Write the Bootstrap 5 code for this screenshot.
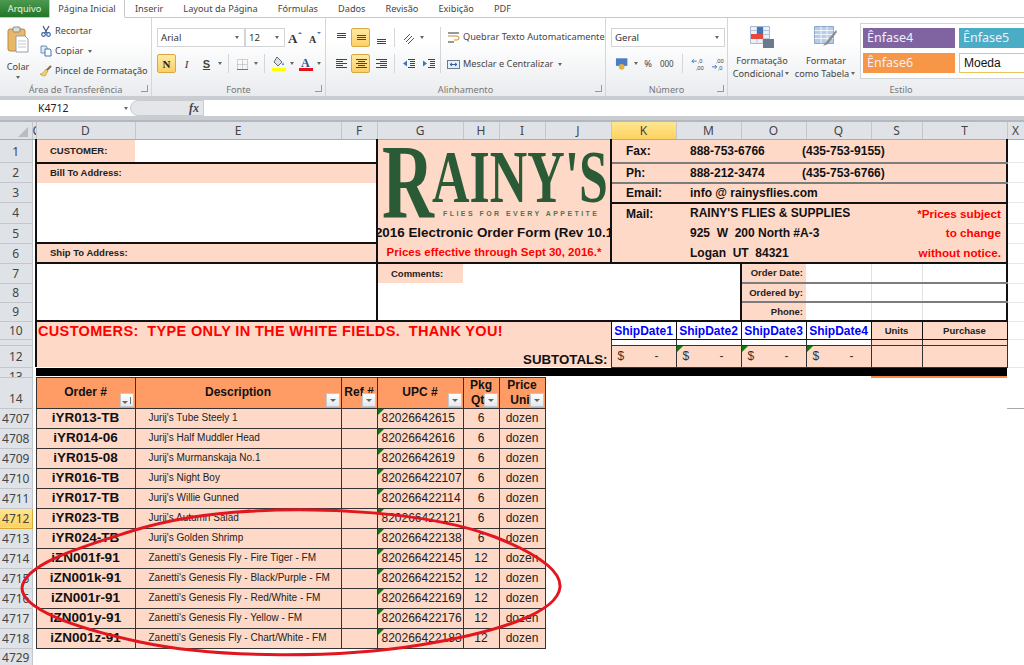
<!DOCTYPE html>
<html lang="pt-BR">
<head>
<meta charset="UTF-8">
<meta name="viewport" content="width=device-width, initial-scale=1.0">
<title>Rainy's Order Form</title>
<link href="https://cdn.jsdelivr.net/npm/bootstrap@5.3.0/dist/css/bootstrap.min.css" rel="stylesheet">
<style>
html, body { height: 665px; overflow: hidden; }
body { position: relative; background: #fff; font-family: "Noto Sans", sans-serif; font-size: 9.2px; color: #444; line-height: 1; }

/* tabs */
.xl-tabs { height: 18px; border-bottom: 1px solid #c6c9cd; }
.xl-file { width: 49px; background: linear-gradient(#4d9a4f, #22752a); color: #e8f3e8; }
.xl-tab { padding: 0 10px; white-space: nowrap; }
.xl-tab-on { width: 76px; margin-bottom: -1px; background: #fff; border: 1px solid #c6c9cd; border-top: 0; border-bottom-color: #fff; padding: 0; justify-content: center; }

/* ribbon */
.xl-ribbon { height: 78px; background: linear-gradient(#fff 30%, #e9ebee); overflow: hidden; }
.xl-grp { flex: none; border-right: 1px solid #d4d6d9; position: relative; }
.xl-grp-body { height: 65px; }
.xl-grp-name { height: 13px; color: #777; justify-content: center; position: relative; }
.xl-launch { position: absolute; right: 3px; top: 2px; width: 7px; height: 7px; border: 1px solid #999; border-width: 0 1px 1px 0; }
.xl-clip { width: 152px; }
.xl-font { width: 174px; }
.xl-align { width: 280px; }
.xl-num { width: 122px; }
.xl-style { width: 346px; border-right: 0; }
.xl-colar { width: 28px; padding-top: 8px; }
.xl-small { gap: 8px; padding-top: 7px; }
.xl-small > div { height: 12px; gap: 3px; white-space: nowrap; }
.xl-small svg { width: 12px; height: 12px; }
.xl-caret { display: inline-block; width: 0; height: 0; border: 2.5px solid transparent; border-top: 3px solid #666; border-bottom: 0; margin: 0 2px; flex: none; }
.xl-rows { padding: 10px 0 0 5px; gap: 7px; }
.xl-r { height: 19px; }
.xl-combo { height: 19px; flex: none; background: #fff; border: 1px solid #d2d5d8; padding: 0 3px; justify-content: space-between; color: #333; font-size: 9.6px; }
.xl-combo-font { width: 88px; }
.xl-combo-size { width: 40px; }
.xl-combo-num { width: 114px; }
.xl-ib { width: 19px; height: 19px; flex: none; justify-content: center; }
.xl-ib svg { display: block; }
.xl-ib + .xl-ib { margin-left: 1px; }
.xl-hot { background: linear-gradient(#fee9a4, #fbcf68); border: 1px solid #d8a93f; border-radius: 2px; }
.xl-sep { width: 1px; height: 19px; background: #d4d6d9; margin: 0 4px; flex: none; }
.xl-sep-tall { height: 46px; margin: 9px 0 0 2px; }
.xl-bold { font: bold 11px "Liberation Serif", serif; color: #222; }
.xl-ital { font: italic 11px "Liberation Serif", serif; color: #333; }
.xl-ul { font: bold 11px "Liberation Sans", sans-serif; text-decoration: underline; color: #444; }
.xl-wide { gap: 11px; padding: 11px 0 0 6px; white-space: nowrap; }
.xl-wide > div { height: 16px; gap: 3px; }
.xl-thou { font-size: 8px; }
.xl-bigbtn { width: 64px; text-align: center; padding-top: 8px; line-height: 12.5px; flex: none; white-space: nowrap; }
.xl-bigbtn svg { display: block; margin: 0 auto 7px; }
.xl-bigbtn-first { margin-left: 2px; }
.xl-gallery { width: 200px; height: 56px; margin: 5px 0 0 2px; background: #fff; border: 1px solid #d2d5d8; padding: 4px 2px; gap: 4px; flex-wrap: wrap; flex: none; }
.xl-st { height: 20px; width: 92px; color: #f3eef8; font-size: 12.5px; padding-left: 4px; white-space: nowrap; }
.xl-st-4 { background: #8064a2; }
.xl-st-5 { background: #4bacc6; }
.xl-st-6 { background: #f79646; }
.xl-st-m { background: #fff; border: 1px solid #eac45c; color: #111; font: 12px "Liberation Sans", sans-serif; }

/* formula bar */
.xl-band { height: 4px; background: #c9ccd0; }
.xl-fbar { height: 17px; border-bottom: 1px solid #c9ccd0; }
.xl-name { width: 130px; padding-left: 38px; justify-content: space-between; color: #222; font-size: 10.5px; }
.xl-fx { width: 74px; background: #e4e6e9; border: 1px solid #c9ccd0; border-radius: 8px 0 0 8px; justify-content: flex-end; padding-right: 4px; font: italic bold 12px "Liberation Serif", serif; color: #444; }
.xl-gap { height: 3px; background: #c9ccd0; }

/* sheet */
.xl-sheet { width: 1024px; table-layout: fixed; border-collapse: collapse; font-family: "Liberation Sans", sans-serif; color: #111; }
.xl-sheet td, .xl-sheet th { padding: 0; overflow: hidden; white-space: nowrap; }
.xl-h0 { height: 17px; } .xl-h1 { height: 23px; } .xl-h20 { height: 20px; } .xl-h19 { height: 19px; } .xl-h10 { height: 18px; }
.xl-h11 { height: 5px; } .xl-h12 { height: 21px; } .xl-h13 { height: 10px; } .xl-h14 { height: 30px; } .xl-h-last { height: 18px; }
.xl-ch { background: #dfe3e8; border: 1px solid #c3c7cc; border-top: 2px solid #b4b8bd; border-bottom: 1px solid #a8acb1; text-align: center; color: #444; font: 12px "Noto Sans", sans-serif !important; }
.xl-ch-on { background: linear-gradient(#ffe68f, #fcd25f); border-bottom-color: #d6a93a; }
.xl-ch-sliver { text-align: left; }
.xl-rh { background: #dfe3e8; border: 1px solid #c3c7cc; border-left: 0; text-align: center; color: #444; font: 12px "Noto Sans", sans-serif; }
.xl-rh-bot { vertical-align: bottom; padding-bottom: 1px !important; }
.xl-rh-on { background: linear-gradient(#ffe68f, #fcd25f); border-color: #d6a93a; }
.xl-rh-clip { height: 9px; overflow: hidden; }
.xl-corner { background: #dfe3e8; border-top: 2px solid #b4b8bd; border-bottom: 1px solid #a8acb1; border-right: 1px solid #c3c7cc; position: relative; }
.xl-corner::after { content: ""; position: absolute; right: 4px; bottom: 2px; border: 5px solid #b9bdc2; border-top-color: transparent; border-left-color: transparent; }
.xl-peach { background: #ffd9c7; }
.xl-white { background: #fff; }
.xl-bk-t { border-top: 2px solid #111; }
.xl-bk-b { border-bottom: 2px solid #111; }
.xl-bk-l { border-left: 2px solid #111; }
.xl-bk-r { border-right: 2px solid #111; }
.xl-gl { border-bottom: 2px solid #7c7c7c; }
.xl-thin-r { border-right: 1px solid #e2e2e2; }
.xl-faint { border-bottom: 1px solid #e8e8e8; }
.xl-tick { border-bottom: 1px solid #aaa; }
.xl-lbl { font-size: 9.5px; font-weight: bold; padding-left: 13px !important; color: #222; }
.xl-lbl-r { font-size: 9.5px; font-weight: bold; text-align: right; padding-right: 3px !important; color: #222; }
.xl-info { font-size: 12px; font-weight: bold; color: #111; }
.xl-info-k { padding-left: 14px !important; }
.xl-info-v { padding-left: 14px !important; }
.xl-phone { width: 112px; display: inline-block; }
.xl-note { color: #f00; text-align: right; padding-right: 5px !important; font-size: 11.7px; font-weight: bold; }
.xl-title { font-size: 13.4px; font-weight: bold; justify-content: center; }
.xl-prices { font-size: 11.5px; font-weight: bold; color: #f00; text-align: center; }
.xl-logo { display: block; }
.xl-warn { font: bold 14.5px "Liberation Sans", sans-serif; color: #f00; padding: 1px 0 0 1px; letter-spacing: .34px; height: 26px; }
.xl-sub { font: bold 13.3px "Liberation Sans", sans-serif; text-align: right; padding-right: 3px; color: #111; }
.xl-ship { color: #00f; font-size: 12px; font-weight: bold; text-align: center; border: 1px solid #111; border-top-width: 2px; }
.xl-unit { font-size: 9.5px; font-weight: bold; text-align: center; border: 1px solid #111; border-top-width: 2px; color: #222; }
.xl-box { border: 1px solid #333; }
.xl-dollar { font-size: 12px; color: #333; padding: 0 17px 0 6px !important; }
.xl-black { background: #000; }
.xl-hd { background: #ff9c66; border: 1px solid #333; font-weight: bold; font-size: 12px; text-align: center; position: relative; color: #111; line-height: 15px; white-space: normal !important; }
.xl-flt { position: absolute; right: 1px; bottom: 1px; width: 14px; height: 14px; background: linear-gradient(#fff, #e6e8eb); border: 1px solid #c3c7cc; }
.xl-flt::after { content: ""; position: absolute; left: 3px; top: 5px; border: 3px solid transparent; border-top: 3px solid #666; border-bottom: 0; }
.xl-flt-sort::before { content: ""; position: absolute; right: 2px; top: 3px; width: 1px; height: 7px; background: #777; }
.xl-flt-sort::after { left: 1px; top: 7px; }
.xl-o-t { border-top: 2px solid #f58a4b; }
.xl-d td { border: 1px solid #333; background: #ffd9c7; }
.xl-d .xl-rh { background: #dfe3e8; border: 1px solid #c3c7cc; border-left: 0; }
.xl-d .xl-rh-on { background: linear-gradient(#ffe68f, #fcd25f); border-color: #d6a93a; }
.xl-d .xl-free { background: #fff; border: 0; }
.xl-ord { font-size: 13.5px; font-weight: bold; text-align: center; }
.xl-desc { font-size: 10px; padding-left: 13px !important; color: #222; }
.xl-upc { font-size: 12px; padding-left: 4px !important; color: #222; }
.xl-flag { position: relative; }
.xl-flag::before { content: ""; position: absolute; left: 0; top: 0; border: 3px solid transparent; border-top-color: #0a7d0a; border-left-color: #0a7d0a; }
.xl-ctr { font-size: 12px; text-align: center; color: #222; }
.xl-circle { position: absolute; left: 0; top: 0; pointer-events: none; }
</style>
</head>
<body>

<svg width="0" height="0" class="position-absolute">
  <symbol id="ln-top" viewBox="0 0 14 14"><path d="M3 2.500h9M3 4.500h9M3 6.500h9" stroke="#444" fill="none"/></symbol>
  <symbol id="ln-mid" viewBox="0 0 14 14"><path d="M3 4.500h9M3 6.500h9M3 8.500h9" stroke="#444" fill="none"/></symbol>
  <symbol id="ln-bot" viewBox="0 0 14 14"><path d="M3 8.500h9M3 10.500h9M3 12.500h9" stroke="#444" fill="none"/></symbol>
  <symbol id="al-l" viewBox="0 0 14 14"><path d="M2 2.500h11M2 4.500h7M2 6.500h11M2 8.500h7M2 10.500h11" stroke="#444" fill="none"/></symbol>
  <symbol id="al-c" viewBox="0 0 14 14"><path d="M2 2.500h11M4 4.500h7M2 6.500h11M4 8.500h7M2 10.500h11" stroke="#444" fill="none"/></symbol>
  <symbol id="al-r" viewBox="0 0 14 14"><path d="M2 2.500h11M6 4.500h7M2 6.500h11M6 8.500h7M2 10.500h11" stroke="#444" fill="none"/></symbol>
  <symbol id="in-l" viewBox="0 0 14 14"><path d="M6 2.500h7M8 4.500h5M8 6.500h5M8 8.500h5M6 10.500h7" stroke="#444" fill="none"/><path d="M1 6.500l4-3v6z" fill="#3b78c4"/></symbol>
  <symbol id="in-r" viewBox="0 0 14 14"><path d="M6 2.500h7M8 4.500h5M8 6.500h5M8 8.500h5M6 10.500h7" stroke="#444" fill="none"/><path d="M5 6.500L1 3.500v6z" fill="#3b78c4"/></symbol>
</svg>

<div class="xl-tabs d-flex align-items-stretch">
  <div class="xl-file d-flex align-items-center justify-content-center">Arquivo</div>
  <div class="xl-tab xl-tab-on d-flex align-items-center">Página Inicial</div>
  <div class="xl-tab d-flex align-items-center">Inserir</div>
  <div class="xl-tab d-flex align-items-center">Layout da Página</div>
  <div class="xl-tab d-flex align-items-center">Fórmulas</div>
  <div class="xl-tab d-flex align-items-center">Dados</div>
  <div class="xl-tab d-flex align-items-center">Revisão</div>
  <div class="xl-tab d-flex align-items-center">Exibição</div>
  <div class="xl-tab d-flex align-items-center">PDF</div>
</div>

<div class="xl-ribbon d-flex">
  <!-- Area de Transferencia -->
  <div class="xl-grp xl-clip">
    <div class="xl-grp-body d-flex ps-1">
      <div class="xl-colar text-center">
        <svg width="22" height="28" viewBox="0 0 22 28" class="d-block mx-auto mb-2">
          <rect x="1" y="3" width="17" height="22" rx="2" fill="#e8b868" stroke="#b98a3e"/>
          <rect x="6" y="1" width="7" height="5" rx="1" fill="#ddd" stroke="#8a8a8a"/>
          <path d="M9 10h9l3 3v13H9z" fill="#fff" stroke="#9a9ea3"/>
          <path d="M11 15h8M11 18h8M11 21h8" stroke="#c3c6ca"/>
        </svg>
        <div>Colar</div>
        <span class="xl-caret mt-1"></span>
      </div>
      <div class="xl-small d-flex flex-column ms-2">
        <div class="d-flex align-items-center"><svg viewBox="0 0 12 12"><path d="M3 1l4 7M9 1L5 8" stroke="#4a5a78" stroke-width="1.3" fill="none"/><circle cx="3.500" cy="9.500" r="1.800" fill="none" stroke="#3860a8" stroke-width="1.200"/><circle cx="8.500" cy="9.500" r="1.800" fill="none" stroke="#3860a8" stroke-width="1.200"/></svg><span>Recortar</span></div>
        <div class="d-flex align-items-center"><svg viewBox="0 0 12 12"><path d="M1 1h5l1 1v6H1z" fill="#dfeaf7" stroke="#6f8fb8"/><path d="M5 4h5l1 1v6H5z" fill="#fff" stroke="#3f74b8"/></svg><span>Copiar</span><span class="xl-caret"></span></div>
        <div class="d-flex align-items-center"><svg viewBox="0 0 12 12"><path d="M11 1L6 6" stroke="#8a6a2a" stroke-width="2"/><path d="M6 4l2 2-3 5c-2 0-4-1-5-2 2 0 4-2 6-5z" fill="#f2cf6b" stroke="#a98a3a" stroke-width=".6"/></svg><span>Pincel de Formatação</span></div>
      </div>
    </div>
    <div class="xl-grp-name d-flex align-items-center">Área de Transferência<i class="xl-launch"></i></div>
  </div>

  <!-- Fonte -->
  <div class="xl-grp xl-font">
    <div class="xl-grp-body xl-rows d-flex flex-column">
      <div class="xl-r d-flex align-items-center">
        <div class="xl-combo xl-combo-font d-flex align-items-center"><span>Arial</span><span class="xl-caret"></span></div>
        <div class="xl-combo xl-combo-size d-flex align-items-center"><span>12</span><span class="xl-caret"></span></div>
        <div class="xl-ib d-flex align-items-center"><svg width="16" height="14" viewBox="0 0 16 14"><text x="1" y="12" font-family="Liberation Serif" font-weight="bold" font-size="13" fill="#333">A</text><path d="M11 3l2-2 2 2z" fill="#3b78c4"/></svg></div>
        <div class="xl-ib d-flex align-items-center"><svg width="16" height="14" viewBox="0 0 16 14"><text x="2" y="12" font-family="Liberation Serif" font-weight="bold" font-size="10" fill="#333">A</text><path d="M10 1h4l-2 2z" fill="#3b78c4"/></svg></div>
      </div>
      <div class="xl-r d-flex align-items-center">
        <div class="xl-ib xl-hot xl-bold d-flex align-items-center">N</div>
        <div class="xl-ib xl-ital d-flex align-items-center">I</div>
        <div class="xl-ib xl-ul d-flex align-items-center">S</div>
        <span class="xl-caret"></span>
        <div class="xl-sep"></div>
        <div class="xl-ib d-flex align-items-center"><svg width="14" height="14" viewBox="0 0 14 14"><path d="M1.500 2.500h10v10h-10zM6.500 2.500v10M1.500 7.500h10" fill="none" stroke="#aaa" stroke-dasharray="1 1"/><path d="M1 12.500h11" stroke="#777"/></svg></div>
        <span class="xl-caret"></span>
        <div class="xl-sep"></div>
        <div class="xl-ib d-flex align-items-center"><svg width="16" height="16" viewBox="0 0 16 16"><path d="M6 1l5 5-4 4-4-4z" fill="#d8e2ee" stroke="#666"/><path d="M12 6l1 3h-2z" fill="#3b78c4"/><rect x="1" y="12" width="14" height="3" fill="#ff0"/></svg></div>
        <span class="xl-caret"></span>
        <div class="xl-ib d-flex align-items-center"><svg width="16" height="16" viewBox="0 0 16 16"><text x="3" y="10.500" font-family="Liberation Serif" font-weight="bold" font-size="12" fill="#2f4f8f">A</text><rect x="1" y="12" width="14" height="3" fill="#e8101a"/></svg></div>
        <span class="xl-caret"></span>
      </div>
    </div>
    <div class="xl-grp-name d-flex align-items-center">Fonte<i class="xl-launch"></i></div>
  </div>

  <!-- Alinhamento -->
  <div class="xl-grp xl-align">
    <div class="xl-grp-body d-flex">
      <div class="xl-rows d-flex flex-column">
        <div class="xl-r d-flex align-items-center">
          <div class="xl-ib d-flex align-items-center"><svg width="14" height="14"><use href="#ln-top"/></svg></div>
          <div class="xl-ib xl-hot d-flex align-items-center"><svg width="14" height="14"><use href="#ln-mid"/></svg></div>
          <div class="xl-ib d-flex align-items-center"><svg width="14" height="14"><use href="#ln-bot"/></svg></div>
          <div class="xl-sep"></div>
          <div class="xl-ib d-flex align-items-center"><svg width="14" height="14" viewBox="0 0 14 14"><path d="M2 9l6-6M4 11l6-6M6 13l6-6" stroke="#555" fill="none"/></svg></div>
          <span class="xl-caret"></span>
        </div>
        <div class="xl-r d-flex align-items-center">
          <div class="xl-ib d-flex align-items-center"><svg width="14" height="14"><use href="#al-l"/></svg></div>
          <div class="xl-ib xl-hot d-flex align-items-center"><svg width="14" height="14"><use href="#al-c"/></svg></div>
          <div class="xl-ib d-flex align-items-center"><svg width="14" height="14"><use href="#al-r"/></svg></div>
          <div class="xl-sep"></div>
          <div class="xl-ib d-flex align-items-center"><svg width="14" height="14"><use href="#in-l"/></svg></div>
          <div class="xl-ib d-flex align-items-center"><svg width="14" height="14"><use href="#in-r"/></svg></div>
        </div>
      </div>
      <div class="xl-sep xl-sep-tall"></div>
      <div class="xl-wide d-flex flex-column">
        <div class="d-flex align-items-center"><svg width="13" height="13" viewBox="0 0 13 13"><path d="M1 2h11M1 11h6" stroke="#777" stroke-width="1.500"/><path d="M1 5h9a2 2 0 0 1 0 4H7" stroke="#d08a2a" fill="none"/></svg><span>Quebrar Texto Automaticamente</span></div>
        <div class="d-flex align-items-center"><svg width="13" height="13" viewBox="0 0 13 13"><rect x=".5" y="2.500" width="12" height="8" fill="#eaf0f8" stroke="#6b7a8f"/><path d="M3 6.500h7M3 6.500l2-1.500M3 6.500l2 1.500M10 6.500L8 5M10 6.500L8 8" stroke="#2f62a8" fill="none"/></svg><span>Mesclar e Centralizar</span><span class="xl-caret"></span></div>
      </div>
    </div>
    <div class="xl-grp-name d-flex align-items-center">Alinhamento<i class="xl-launch"></i></div>
  </div>

  <!-- Numero -->
  <div class="xl-grp xl-num">
    <div class="xl-grp-body xl-rows d-flex flex-column">
      <div class="xl-combo xl-combo-num d-flex align-items-center"><span>Geral</span><span class="xl-caret"></span></div>
      <div class="xl-r d-flex align-items-center gap-1">
        <svg class="ms-1" width="14" height="14" viewBox="0 0 14 14"><rect x="1" y="1" width="12" height="8" fill="#4a7fc4"/><circle cx="7" cy="10" r="3" fill="#e4b13c"/></svg>
        <span class="xl-caret"></span>
        <span>%</span>
        <span class="xl-thou ms-1">000</span>
        <div class="xl-sep"></div>
        <svg width="17" height="14" viewBox="0 0 17 14"><path d="M1 4h5M1 4l2-2M1 4l2 2" stroke="#3b78c4" fill="none"/><text x="7" y="6" font-size="6" font-family="Liberation Sans" fill="#444">,0</text><text x="5" y="13" font-size="6" font-family="Liberation Sans" fill="#444">,00</text></svg>
        <svg width="17" height="14" viewBox="0 0 17 14"><path d="M1 10h5M6 10L4 8M6 10l-2 2" stroke="#3b78c4" fill="none"/><text x="5" y="6" font-size="6" font-family="Liberation Sans" fill="#444">,00</text><text x="7" y="13" font-size="6" font-family="Liberation Sans" fill="#444">,0</text></svg>
      </div>
    </div>
    <div class="xl-grp-name d-flex align-items-center">Número<i class="xl-launch"></i></div>
  </div>

  <!-- Estilo -->
  <div class="xl-grp xl-style">
    <div class="xl-grp-body d-flex">
      <div class="xl-bigbtn xl-bigbtn-first">
        <svg width="24" height="22" viewBox="0 0 24 22"><path d="M.5.500h19v17H.5z" fill="#eaf0f8" stroke="#a9b9cd"/><path d="M7 .5v17M13 .5v17M.5 4.500h19M.5 8.500h19M.5 12.500h19" stroke="#b7c6d8"/><rect x="7" y="1" width="6" height="7" fill="#3f74b8"/><rect x="1" y="8" width="12" height="5" fill="#e5483e"/><rect x="13" y="13" width="11" height="9" fill="#6a7b8f"/></svg>
        <div>Formatação</div>
        <div class="d-flex align-items-center justify-content-center">Condicional<span class="xl-caret"></span></div>
      </div>
      <div class="xl-bigbtn">
        <svg width="24" height="22" viewBox="0 0 24 22"><path d="M.5.500h19v17H.5z" fill="#b8cdea" stroke="#8ea5c4"/><path d="M7 .5v17M13 .5v17M.5 4.500h19M.5 8.500h19M.5 12.500h19" stroke="#eef3fa"/><path d="M22 4L12 16l-3 4 5-2L23 6z" fill="#8b8f95"/></svg>
        <div>Formatar</div>
        <div class="d-flex align-items-center justify-content-center">como Tabela<span class="xl-caret"></span></div>
      </div>
      <div class="xl-gallery d-flex">
        <div class="xl-st xl-st-4 d-flex align-items-center">Ênfase4</div>
        <div class="xl-st xl-st-5 d-flex align-items-center">Ênfase5</div>
        <div class="xl-st xl-st-6 d-flex align-items-center">Ênfase6</div>
        <div class="xl-st xl-st-m d-flex align-items-center">Moeda</div>
      </div>
    </div>
    <div class="xl-grp-name d-flex align-items-center">Estilo</div>
  </div>
</div>

<div class="xl-band"></div>
<div class="xl-fbar d-flex">
  <div class="xl-name d-flex align-items-center"><span>K4712</span><span class="xl-caret"></span></div>
  <div class="xl-fx d-flex align-items-center">fx</div>
</div>
<div class="xl-gap"></div>

<table class="xl-sheet">
  <colgroup>
    <col style="width:32px"><col style="width:4px"><col style="width:99px"><col style="width:206px"><col style="width:36px"><col style="width:86px"><col style="width:36px"><col style="width:46px"><col style="width:66px"><col style="width:65px"><col style="width:65px"><col style="width:65px"><col style="width:65px"><col style="width:51px"><col style="width:85px"><col style="width:17px">
  </colgroup>
  <tr class="xl-h0">
    <th class="xl-corner"></th><th class="xl-ch xl-ch-sliver">C</th><th class="xl-ch">D</th><th class="xl-ch">E</th><th class="xl-ch">F</th><th class="xl-ch">G</th><th class="xl-ch">H</th><th class="xl-ch">I</th><th class="xl-ch">J</th><th class="xl-ch xl-ch-on">K</th><th class="xl-ch">M</th><th class="xl-ch">O</th><th class="xl-ch">Q</th><th class="xl-ch">S</th><th class="xl-ch">T</th><th class="xl-ch">X</th>
  </tr>
  <tr class="xl-h1">
    <td class="xl-rh">1</td><td></td>
    <td class="xl-peach xl-lbl xl-bk-l xl-bk-b">CUSTOMER:</td><td colspan="2" class="xl-white xl-bk-b xl-bk-r"></td>
    <td colspan="4" rowspan="4" class="xl-peach xl-bk-r">
      <svg class="xl-logo" width="234" height="83" viewBox="0 0 234 83">
        <text x="4" y="77" font-family="Liberation Serif" font-weight="bold" font-size="106" fill="#2b5a36" textLength="52" lengthAdjust="spacingAndGlyphs">R</text>
        <text x="54" y="62" font-family="Liberation Serif" font-weight="bold" font-size="73" fill="#2b5a36" textLength="176" lengthAdjust="spacingAndGlyphs">AINY'S</text>
        <text x="65" y="76" font-family="Liberation Sans" font-weight="bold" font-size="7" fill="#4d7556" textLength="154">FLIES FOR EVERY APPETITE</text>
      </svg>
    </td>
    <td class="xl-peach xl-info xl-info-k xl-gl">Fax:</td>
    <td colspan="5" class="xl-peach xl-info xl-info-v xl-gl xl-bk-r"><span class="xl-phone">888-753-6766</span>(435-753-9155)</td>
    <td class="xl-faint"></td>
  </tr>
  <tr class="xl-h20">
    <td class="xl-rh">2</td><td></td>
    <td colspan="3" class="xl-peach xl-lbl xl-bk-l xl-bk-r">Bill To Address:</td>
    <td class="xl-peach xl-info xl-info-k xl-gl">Ph:</td>
    <td colspan="5" class="xl-peach xl-info xl-info-v xl-gl xl-bk-r"><span class="xl-phone">888-212-3474</span>(435-753-6766)</td>
    <td class="xl-faint"></td>
  </tr>
  <tr class="xl-h20">
    <td class="xl-rh">3</td><td></td>
    <td colspan="3" rowspan="3" class="xl-white xl-bk-l xl-bk-r xl-bk-b"></td>
    <td class="xl-peach xl-info xl-info-k xl-bk-b">Email:</td>
    <td colspan="5" class="xl-peach xl-info xl-info-v xl-bk-b xl-bk-r">info @ rainysflies.com</td>
    <td class="xl-faint"></td>
  </tr>
  <tr class="xl-h20">
    <td class="xl-rh">4</td><td></td>
    <td rowspan="3" class="xl-peach xl-info xl-info-k xl-bk-b align-top pt-1">Mail:</td>
    <td colspan="3" class="xl-peach xl-info xl-info-v">RAINY'S FLIES &amp; SUPPLIES</td>
    <td colspan="2" class="xl-peach xl-note xl-bk-r">*Prices subject</td>
    <td class="xl-faint"></td>
  </tr>
  <tr class="xl-h20">
    <td class="xl-rh">5</td><td></td>
    <td colspan="4" class="xl-peach xl-bk-r"><div class="xl-title d-flex">2016&nbsp;Electronic&nbsp;Order&nbsp;Form&nbsp;(Rev&nbsp;10.1</div></td>
    <td colspan="3" class="xl-peach xl-info xl-info-v">925&nbsp; W&nbsp; 200 North #A-3</td>
    <td colspan="2" class="xl-peach xl-note xl-bk-r">to change</td>
    <td class="xl-faint"></td>
  </tr>
  <tr class="xl-h20">
    <td class="xl-rh">6</td><td></td>
    <td colspan="3" class="xl-peach xl-lbl xl-bk-l xl-bk-r xl-bk-b">Ship To Address:</td>
    <td colspan="4" class="xl-peach xl-prices xl-bk-r xl-bk-b">Prices effective through Sept 30, 2016.*</td>
    <td colspan="3" class="xl-peach xl-info xl-info-v xl-bk-b">Logan&nbsp; UT&nbsp; 84321</td>
    <td colspan="2" class="xl-peach xl-note xl-bk-r xl-bk-b">without notice.</td>
    <td class="xl-faint"></td>
  </tr>
  <tr class="xl-h20">
    <td class="xl-rh">7</td><td></td>
    <td colspan="3" rowspan="3" class="xl-white xl-bk-l xl-bk-r xl-bk-b"></td>
    <td class="xl-peach xl-lbl">Comments:</td>
    <td colspan="5" class="xl-white xl-bk-r"></td>
    <td class="xl-peach xl-lbl-r xl-gl">Order Date:</td>
    <td class="xl-white xl-thin-r xl-gl"></td><td class="xl-white xl-thin-r xl-gl"></td><td class="xl-white xl-gl xl-bk-r"></td>
    <td class="xl-faint"></td>
  </tr>
  <tr class="xl-h19">
    <td class="xl-rh">8</td><td></td>
    <td colspan="6" rowspan="2" class="xl-white xl-bk-r xl-bk-b"></td>
    <td class="xl-peach xl-lbl-r xl-gl">Ordered by:</td>
    <td class="xl-white xl-thin-r xl-gl"></td><td class="xl-white xl-thin-r xl-gl"></td><td class="xl-white xl-gl xl-bk-r"></td>
    <td class="xl-faint"></td>
  </tr>
  <tr class="xl-h19">
    <td class="xl-rh">9</td><td></td>
    <td class="xl-peach xl-lbl-r xl-bk-b">Phone:</td>
    <td class="xl-white xl-thin-r xl-bk-b"></td><td class="xl-white xl-thin-r xl-bk-b"></td><td class="xl-white xl-bk-b xl-bk-r"></td>
    <td class="xl-faint"></td>
  </tr>
  <tr class="xl-h10">
    <td class="xl-rh">10</td><td></td>
    <td colspan="7" rowspan="3" class="xl-peach xl-bk-l align-top">
      <div class="xl-warn">CUSTOMERS:&nbsp; TYPE ONLY IN THE WHITE FIELDS.&nbsp; THANK YOU!</div>
      <div class="xl-sub pt-1">SUBTOTALS:</div>
    </td>
    <td class="xl-white xl-ship">ShipDate1</td><td class="xl-white xl-ship">ShipDate2</td><td class="xl-white xl-ship">ShipDate3</td><td class="xl-white xl-ship">ShipDate4</td>
    <td class="xl-peach xl-unit">Units</td><td class="xl-peach xl-unit xl-bk-r">Purchase</td>
    <td class="xl-faint"></td>
  </tr>
  <tr class="xl-h11">
    <td class="xl-rh"></td><td></td>
    <td class="xl-white xl-box"></td><td class="xl-white xl-box"></td><td class="xl-white xl-box"></td><td class="xl-white xl-box"></td>
    <td class="xl-peach xl-box"></td><td class="xl-peach xl-box xl-bk-r"></td>
    <td></td>
  </tr>
  <tr class="xl-h12">
    <td class="xl-rh">12</td><td></td>
    <td class="xl-peach xl-box xl-dollar"><div class="d-flex justify-content-between"><span>$</span><span>-</span></div></td>
    <td class="xl-peach xl-box xl-dollar xl-flag"><div class="d-flex justify-content-between"><span>$</span><span>-</span></div></td>
    <td class="xl-peach xl-box xl-dollar xl-flag"><div class="d-flex justify-content-between"><span>$</span><span>-</span></div></td>
    <td class="xl-peach xl-box xl-dollar xl-flag"><div class="d-flex justify-content-between"><span>$</span><span>-</span></div></td>
    <td class="xl-peach xl-box"></td><td class="xl-peach xl-box xl-bk-r"></td>
    <td class="xl-faint"></td>
  </tr>
  <tr class="xl-h13">
    <td class="xl-rh"><div class="xl-rh-clip">13</div></td><td></td>
    <td colspan="13" class="xl-black"></td>
    <td></td>
  </tr>
  <tr class="xl-h14">
    <td class="xl-rh xl-rh-bot">14</td><td></td>
    <td class="xl-hd">Order #<i class="xl-flt xl-flt-sort"></i></td>
    <td class="xl-hd">Description<i class="xl-flt"></i></td>
    <td class="xl-hd">Ref #<i class="xl-flt"></i></td>
    <td class="xl-hd">UPC #<i class="xl-flt"></i></td>
    <td class="xl-hd">Pkg Qty<i class="xl-flt"></i></td>
    <td class="xl-hd">Price Unit<i class="xl-flt"></i></td>
    <td colspan="5"></td>
    <td class="xl-o-t"></td><td class="xl-o-t"></td>
    <td class="xl-tick"></td>
  </tr>
  <tr class="xl-d xl-h20"><td class="xl-rh">4707</td><td class="xl-free"></td><td class="xl-ord">iYR013-TB</td><td class="xl-desc">Jurij's Tube Steely 1</td><td></td><td class="xl-upc xl-flag">82026642615</td><td class="xl-ctr">6</td><td class="xl-ctr">dozen</td><td colspan="8" rowspan="13" class="xl-free"></td></tr>
  <tr class="xl-d xl-h20"><td class="xl-rh">4708</td><td class="xl-free"></td><td class="xl-ord">iYR014-06</td><td class="xl-desc">Jurij's Half Muddler Head</td><td></td><td class="xl-upc xl-flag">82026642616</td><td class="xl-ctr">6</td><td class="xl-ctr">dozen</td></tr>
  <tr class="xl-d xl-h20"><td class="xl-rh">4709</td><td class="xl-free"></td><td class="xl-ord">iYR015-08</td><td class="xl-desc">Jurij's Murmanskaja No.1</td><td></td><td class="xl-upc xl-flag">82026642619</td><td class="xl-ctr">6</td><td class="xl-ctr">dozen</td></tr>
  <tr class="xl-d xl-h20"><td class="xl-rh">4710</td><td class="xl-free"></td><td class="xl-ord">iYR016-TB</td><td class="xl-desc">Jurij's Night Boy</td><td></td><td class="xl-upc xl-flag">820266422107</td><td class="xl-ctr">6</td><td class="xl-ctr">dozen</td></tr>
  <tr class="xl-d xl-h20"><td class="xl-rh">4711</td><td class="xl-free"></td><td class="xl-ord">iYR017-TB</td><td class="xl-desc">Jurij's Willie Gunned</td><td></td><td class="xl-upc xl-flag">820266422114</td><td class="xl-ctr">6</td><td class="xl-ctr">dozen</td></tr>
  <tr class="xl-d xl-h20"><td class="xl-rh xl-rh-on">4712</td><td class="xl-free"></td><td class="xl-ord">iYR023-TB</td><td class="xl-desc">Jurij's Autumn Salad</td><td></td><td class="xl-upc xl-flag">820266422121</td><td class="xl-ctr">6</td><td class="xl-ctr">dozen</td></tr>
  <tr class="xl-d xl-h20"><td class="xl-rh">4713</td><td class="xl-free"></td><td class="xl-ord">iYR024-TB</td><td class="xl-desc">Jurij's Golden Shrimp</td><td></td><td class="xl-upc xl-flag">820266422138</td><td class="xl-ctr">6</td><td class="xl-ctr">dozen</td></tr>
  <tr class="xl-d xl-h20"><td class="xl-rh">4714</td><td class="xl-free"></td><td class="xl-ord">iZN001f-91</td><td class="xl-desc">Zanetti's Genesis Fly - Fire Tiger - FM</td><td></td><td class="xl-upc xl-flag">820266422145</td><td class="xl-ctr">12</td><td class="xl-ctr">dozen</td></tr>
  <tr class="xl-d xl-h20"><td class="xl-rh">4715</td><td class="xl-free"></td><td class="xl-ord">iZN001k-91</td><td class="xl-desc">Zanetti's Genesis Fly - Black/Purple - FM</td><td></td><td class="xl-upc xl-flag">820266422152</td><td class="xl-ctr">12</td><td class="xl-ctr">dozen</td></tr>
  <tr class="xl-d xl-h20"><td class="xl-rh">4716</td><td class="xl-free"></td><td class="xl-ord">iZN001r-91</td><td class="xl-desc">Zanetti's Genesis Fly - Red/White - FM</td><td></td><td class="xl-upc xl-flag">820266422169</td><td class="xl-ctr">12</td><td class="xl-ctr">dozen</td></tr>
  <tr class="xl-d xl-h20"><td class="xl-rh">4717</td><td class="xl-free"></td><td class="xl-ord">iZN001y-91</td><td class="xl-desc">Zanetti's Genesis Fly - Yellow - FM</td><td></td><td class="xl-upc xl-flag">820266422176</td><td class="xl-ctr">12</td><td class="xl-ctr">dozen</td></tr>
  <tr class="xl-d xl-h20"><td class="xl-rh">4718</td><td class="xl-free"></td><td class="xl-ord">iZN001z-91</td><td class="xl-desc">Zanetti's Genesis Fly - Chart/White - FM</td><td></td><td class="xl-upc xl-flag">820266422183</td><td class="xl-ctr">12</td><td class="xl-ctr">dozen</td></tr>
  <tr class="xl-d xl-h-last"><td class="xl-rh">4729</td><td class="xl-free" colspan="7"></td></tr>
</table>

<!-- hand drawn circle around the Zanetti rows -->
<svg class="xl-circle" width="1024" height="665" viewBox="0 0 1024 665">
  <path d="M238 512C320 506 430 512 495 537C540 555 561 572 560 587C558 612 500 632 420 645C340 658 220 659 140 642C70 627 22 608 22 588C24 563 85 546 135 530C165 521 200 514 250 511" fill="none" stroke="#e3161f" stroke-width="3"/>
</svg>

<script src="https://cdn.jsdelivr.net/npm/bootstrap@5.3.0/dist/js/bootstrap.bundle.min.js"></script>
</body>
</html>
